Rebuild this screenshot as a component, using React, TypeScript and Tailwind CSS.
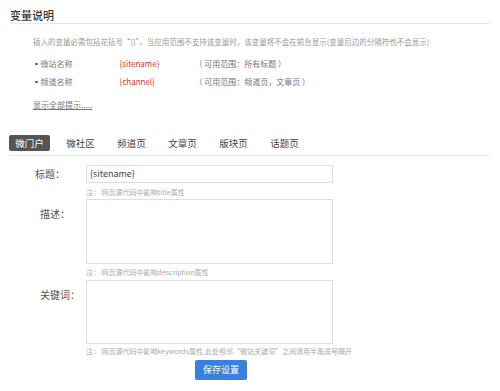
import React from "react";

const font = { fontFamily: '"Noto Sans CJK SC", "Noto Sans", sans-serif' };

export default function App() {
  const tabs = ["微门户", "微社区", "频道页", "文章页", "版块页", "话题页"];
  return (
    <div className="w-[500px] h-[391px] bg-white px-[10px] pt-[8px] text-[#555]" style={font}>
      <div className="border-b border-[#e8e8e8] pb-[1px]">
        <div className="text-[11px] leading-[14px] text-[#333] font-medium">变量说明</div>
      </div>
      <div className="mt-[12px] pl-[23px] text-[7.5px] leading-[12px] text-[#999] whitespace-nowrap">
        插入的变量必需包括花括号“{"{}"}”，当应用范围不支持该变量时，该变量将不会在前台显示(变量后边的分隔符也不会显示)
      </div>
      <div className="mt-[10px] pl-[25px] text-[8px] leading-[12px]">
        <div className="flex items-center">
          <span className="w-[2.5px] h-[2.5px] rounded-full bg-[#555] mr-[3px]" />
          <span className="w-[79px] text-[#777]">微站名称</span>
          <span className="w-[75px] text-[#e0322f]">{"{sitename}"}</span>
          <span className="text-[#777]">（ 可用范围：所有标题 ）</span>
        </div>
        <div className="flex items-center mt-[6px]">
          <span className="w-[2.5px] h-[2.5px] rounded-full bg-[#555] mr-[3px]" />
          <span className="w-[79px] text-[#777]">频道名称</span>
          <span className="w-[75px] text-[#e0322f]">{"{channel}"}</span>
          <span className="text-[#777]">（ 可用范围：频道页，文章页 ）</span>
        </div>
      </div>
      <div className="mt-[11px] pl-[23px] text-[8px] leading-[12px] text-[#777]">
        <span className="underline">显示全部提示.....</span>
      </div>
      <div className="mt-[24px] flex gap-[10px] border-b border-[#e8e8e8] pb-[4px] -ml-[1px]">
        {tabs.map((t, i) => (
          <div
            key={t}
            className={
              "w-[41px] h-[16px] flex items-center justify-center text-[9.5px] rounded-[2px] " +
              (i === 0 ? "bg-[#555] text-white" : "text-[#444]")
            }
          >
            {t}
          </div>
        ))}
      </div>

      <div className="mt-[9px] flex">
        <div className="w-[76px] pl-[25px] text-[10px] leading-[18px] text-[#555]">标题：</div>
        <div>
          <div className="w-[247px] h-[18px] border border-[#ddd] px-[3px] text-[9px] leading-[16px] text-[#444]">
            {"{sitename}"}
          </div>
          <div className="mt-[4px] text-[7px] leading-[10px] text-[#aaa]">注： 网页源代码中影响title属性</div>
        </div>
      </div>

      <div className="mt-[2px] flex">
        <div className="w-[76px] pl-[30px] pt-[8px] text-[10px] leading-[14px] text-[#555]">描述：</div>
        <div>
          <div className="w-[247px] h-[65px] border border-[#ddd]" />
          <div className="mt-[3px] text-[7px] leading-[10px] text-[#aaa]">注： 网页源代码中影响description属性</div>
        </div>
      </div>

      <div className="mt-[3px] flex">
        <div className="w-[76px] pl-[30px] pt-[8px] text-[10px] leading-[14px] text-[#555] whitespace-nowrap">关键词：</div>
        <div>
          <div className="w-[247px] h-[64px] border border-[#ddd]" />
          <div className="mt-[2px] text-[7px] leading-[10px] text-[#aaa] whitespace-nowrap">
            注： 网页源代码中影响keywords属性,此处相邻“微站关键词”之间请用半角逗号隔开
          </div>
          <div className="mt-[4px] ml-[109px] w-[52px] h-[20px] bg-[#3b7fe0] rounded-[2px] flex items-center justify-center text-[9px] text-white">
            保存设置
          </div>
        </div>
      </div>
    </div>
  );
}
